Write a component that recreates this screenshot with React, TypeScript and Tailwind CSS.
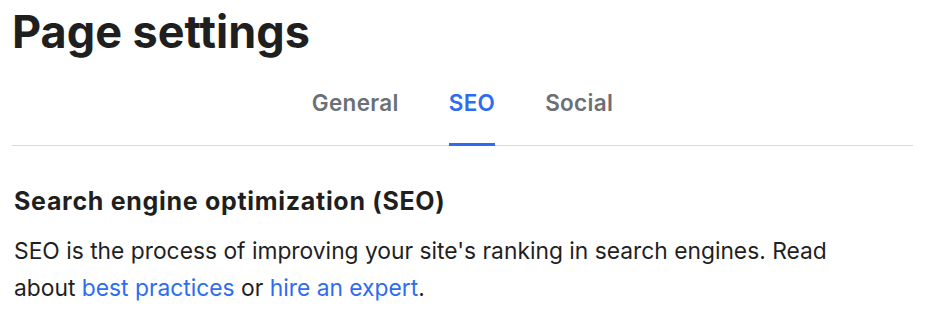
export default function App() {
  return (
    <div className="bg-white w-[929px] h-[315px] pl-3 pr-4 text-[#1f1f1f]" style={{ fontFamily: 'Inter, "Noto Sans", sans-serif' }}>
      <h1 className="text-[45px] font-bold leading-[56px] pt-[4px]">Page settings</h1>
      <div className="border-b border-[#d9d9d9] flex justify-center gap-[50px] [font-optical-sizing:none] [font-variation-settings:'opsz'_14]">
        <button className="text-[22.5px] leading-[28px] font-semibold tracking-[0.3px] text-[#6b6f76] pt-[29px] pb-[28px]">General</button>
        <button className="text-[22.5px] leading-[28px] font-semibold tracking-[0.3px] text-[#2d6cf0] pt-[29px] pb-[26px] border-b-[3px] border-[#2d6cf0] -mb-[1px]">SEO</button>
        <button className="text-[22.5px] leading-[28px] font-semibold tracking-[0.3px] text-[#6b6f76] pt-[29px] pb-[28px]">Social</button>
      </div>
      <div className="pt-[40px] px-[2px] [font-optical-sizing:none] [font-variation-settings:'opsz'_14]">
        <h2 className="text-[25px] font-bold leading-[30px] tracking-[0.7px]">Search engine optimization (SEO)</h2>
        <p className="text-[22.8px] leading-[37px] mt-[16px] max-w-[845px]">
          SEO is the process of improving your site's ranking in search engines. Read about{' '}
          <a className="text-[#2d6cf0]">best practices</a> or <a className="text-[#2d6cf0]">hire an expert</a>.
        </p>
      </div>
    </div>
  );
}
